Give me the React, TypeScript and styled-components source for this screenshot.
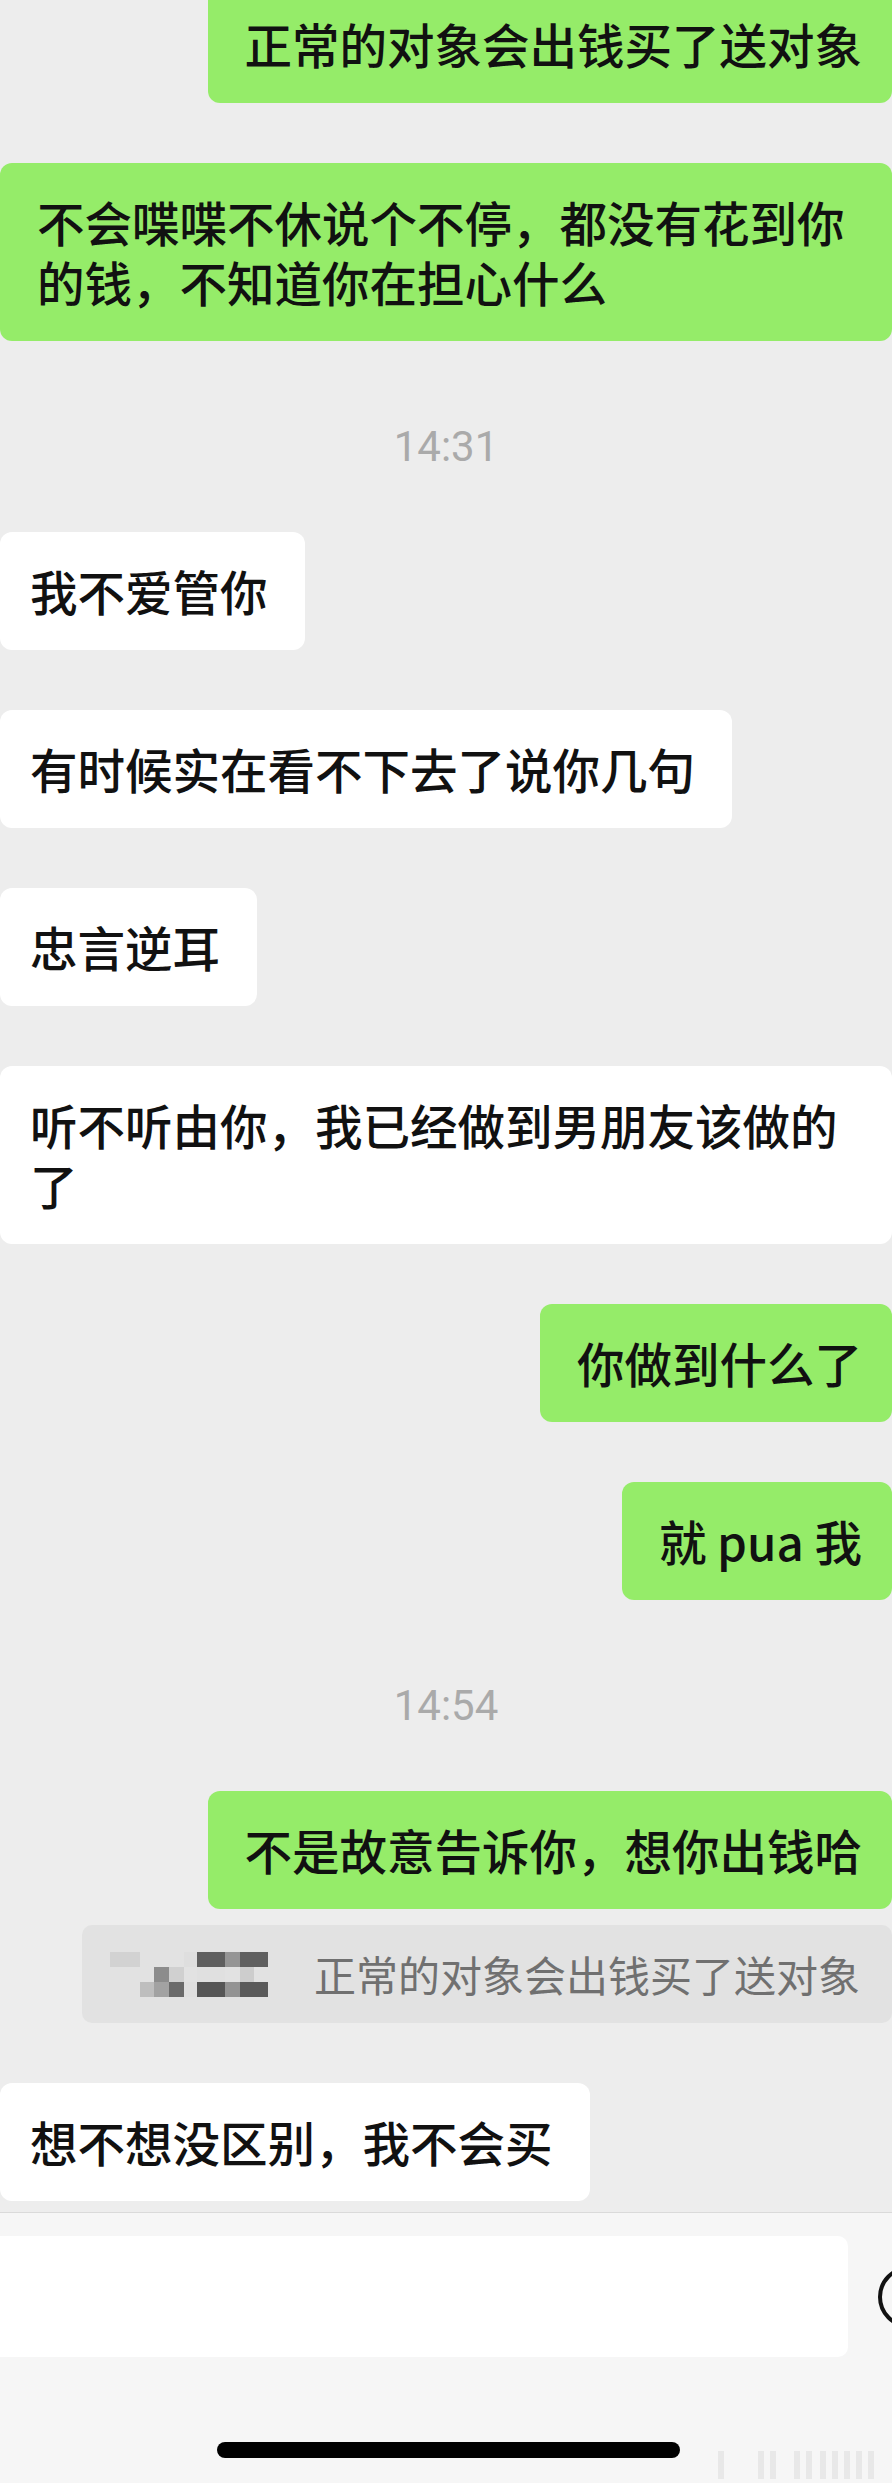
import styled, { createGlobalStyle } from "styled-components";

type Side = "left" | "right";

interface Message {
  kind: "msg" | "time" | "quoted";
  side?: Side;
  text: string;
  quote?: string;
}

const messages: Message[] = [
  { kind: "msg", side: "right", text: "正常的对象会出钱买了送对象" },
  {
    kind: "msg",
    side: "right",
    text: "不会喋喋不休说个不停，都没有花到你的钱，不知道你在担心什么",
  },
  { kind: "time", text: "14:31" },
  { kind: "msg", side: "left", text: "我不爱管你" },
  { kind: "msg", side: "left", text: "有时候实在看不下去了说你几句" },
  { kind: "msg", side: "left", text: "忠言逆耳" },
  { kind: "msg", side: "left", text: "听不听由你，我已经做到男朋友该做的了" },
  { kind: "msg", side: "right", text: "你做到什么了" },
  { kind: "msg", side: "right", text: "就 pua 我" },
  { kind: "time", text: "14:54" },
  {
    kind: "quoted",
    side: "right",
    text: "不是故意告诉你，想你出钱哈",
    quote: "正常的对象会出钱买了送对象",
  },
  { kind: "msg", side: "left", text: "想不想没区别，我不会买" },
];

// pixelated name in the quote: [x, y, w, h, colour]
const mosaic: [number, number, number, number, string][] = [
  [0, 0, 30, 15, "#d2d2d2"],
  [74, 0, 13, 15, "#dedede"],
  [87, 0, 28, 15, "#5f5f5f"],
  [115, 0, 15, 15, "#959595"],
  [130, 0, 28, 15, "#5f5f5f"],
  [44, 15, 15, 15, "#8c8c8c"],
  [59, 15, 15, 15, "#d0d0d0"],
  [87, 15, 28, 15, "#e0e0e0"],
  [130, 15, 14, 15, "#cdcdcd"],
  [30, 30, 14, 15, "#bebebe"],
  [44, 30, 15, 15, "#a2a2a2"],
  [59, 30, 15, 15, "#6a6a6a"],
  [74, 30, 13, 15, "#dfdfdf"],
  [87, 30, 28, 15, "#565656"],
  [115, 30, 15, 15, "#939393"],
  [130, 30, 28, 15, "#5a5a5a"],
];

export default function App() {
  return (
    <>
      <GlobalStyle />
      <Page>
        <ChatList>
          {messages.map((m, i) => {
            if (m.kind === "time") return <TimeStamp key={i}>{m.text}</TimeStamp>;
            if (m.kind === "quoted")
              return (
                <SentGroup key={i}>
                  <Bubble side="right">{m.text}</Bubble>
                  <Quote>
                    <svg width="158" height="45" viewBox="0 0 158 45">
                      {mosaic.map(([x, y, w, h, c], j) => (
                        <rect key={j} x={x} y={y} width={w} height={h} fill={c} />
                      ))}
                    </svg>
                    <QuoteText>{m.quote}</QuoteText>
                  </Quote>
                </SentGroup>
              );
            return (
              <Row key={i} side={m.side!}>
                <Bubble side={m.side!}>{m.text}</Bubble>
              </Row>
            );
          })}
        </ChatList>

        <BottomBar>
          <InputRow>
            <InputBox />
            <EmojiButton>
              <svg width="62" height="62" viewBox="0 0 62 62">
                <circle cx="31" cy="31" r="29" fill="none" stroke="#111" strokeWidth="4" />
              </svg>
            </EmojiButton>
          </InputRow>
          <HomeIndicator />
          <Watermark>
            <svg width="166" height="38" viewBox="0 0 166 38">
              {[0, 40, 52, 76, 88, 102, 114, 126, 138, 150].map((x, j) => (
                <rect key={j} x={x} y={6} width="6" height="28" fill="#e8e8e8" />
              ))}
            </svg>
          </Watermark>
        </BottomBar>
      </Page>
    </>
  );
}

const GlobalStyle = createGlobalStyle`
  body {
    margin: 0;
    background: #ededed;
    font-family: "Noto Sans CJK SC", "Noto Sans", sans-serif;
  }
`;

const Page = styled.div`
  width: 892px;
  height: 2483px;
  overflow: hidden;
  display: flex;
  flex-direction: column;
  background: #ededed;
`;

const ChatList = styled.div`
  display: flex;
  flex-direction: column;
  gap: 60px;
  margin-top: -15px;
  padding-bottom: 11px;
`;

const Row = styled.div<{ side: Side }>`
  display: flex;
  justify-content: ${(p) => (p.side === "right" ? "flex-end" : "flex-start")};
`;

const Bubble = styled.div<{ side: Side }>`
  box-sizing: border-box;
  max-width: 100%;
  padding: ${(p) => (p.side === "right" ? "29px 30px 29px 37px" : "29px 37px 29px 30px")};
  border-radius: 12px;
  background: ${(p) => (p.side === "right" ? "#95ec69" : "#ffffff")};
  color: #111;
  font-size: 47.5px;
  line-height: 60px;
  font-weight: 500;
`;

const TimeStamp = styled.div`
  padding-top: 21px;
  line-height: 50px;
  text-align: center;
  font-family: Roboto, "Liberation Sans", sans-serif;
  font-size: 42px;
  color: #aaaaaa;
`;

const SentGroup = styled.div`
  display: flex;
  flex-direction: column;
  align-items: flex-end;
  gap: 16px;
`;

const Quote = styled.div`
  display: flex;
  align-items: center;
  gap: 46px;
  height: 98px;
  box-sizing: border-box;
  padding: 0 32px 0 28px;
  border-radius: 10px;
  background: #e2e2e2;
`;

const QuoteText = styled.span`
  font-size: 42px;
  line-height: 50px;
  color: #707070;
`;

const BottomBar = styled.div`
  position: relative;
  flex: 1;
  display: flex;
  flex-direction: column;
  border-top: 1px solid #dadada;
  background: #f6f6f6;
`;

const InputRow = styled.div`
  display: flex;
  align-items: center;
  gap: 30px;
  margin-left: -20px;
  padding-top: 23px;
`;

const InputBox = styled.div`
  flex-shrink: 0;
  width: 868px;
  height: 121px;
  border-radius: 10px;
  background: #ffffff;
`;

const EmojiButton = styled.div`
  flex-shrink: 0;
  display: flex;
  width: 62px;
  height: 62px;
`;

const HomeIndicator = styled.div`
  width: 463px;
  height: 16px;
  margin: 85px 0 0 217px;
  border-radius: 8px;
  background: #000;
`;

const Watermark = styled.div`
  position: absolute;
  right: 8px;
  bottom: 0;
  display: flex;
`;
